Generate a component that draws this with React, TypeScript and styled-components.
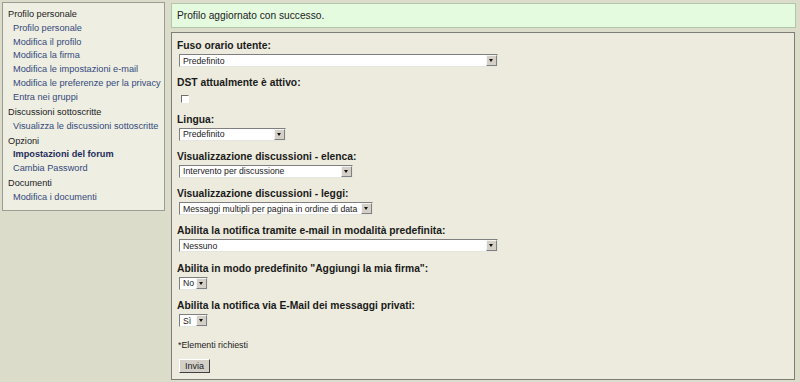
import React from "react";
import styled, { createGlobalStyle } from "styled-components";

const Global = createGlobalStyle`
  html, body { margin: 0; padding: 0; }
  body {
    background: #dcdccb;
    font-family: "Liberation Sans", Arial, sans-serif;
    color: #1a1a1a;
    width: 800px;
    height: 382px;
    overflow: hidden;
  }
`;

const Page = styled.div`
  display: flex;
  align-items: flex-start;
  gap: 6px;
  padding: 2px 4px 2px 2px;
  box-sizing: border-box;
  width: 800px;
  height: 382px;
`;

const Sidebar = styled.nav`
  width: 163px;
  height: 209px;
  box-sizing: border-box;
  background: #eeeee2;
  border: 1px solid #9c9c92;
  padding: 5px 0 0 5px;
  font-size: 9.2px;
  line-height: 13.8px;
`;

const Group = styled.div`
  & + & { margin-top: 1.2px; }
`;

const GroupTitle = styled.div`
  color: #222222;
`;

const NavLink = styled.a<{ $active?: boolean }>`
  display: block;
  padding-left: 5px;
  color: ${(p) => (p.$active ? "#1f2d5c" : "#34497c")};
  font-weight: ${(p) => (p.$active ? "bold" : "normal")};
  text-decoration: none;
`;

const Main = styled.div`
  flex: 1;
  display: flex;
  flex-direction: column;
  gap: 4px;
  padding-top: 1px;
`;

const Success = styled.div`
  height: 25px;
  box-sizing: border-box;
  background: #e4fbe0;
  border: 1px solid #b3c6ab;
  padding: 0 5px;
  font-size: 10.2px;
  line-height: 23px;
  color: #222;
`;

const FormPanel = styled.form`
  height: 348px;
  margin-right: 1px;
  box-sizing: border-box;
  background: #ecebdd;
  border: 1px solid #7d7d78;
  padding: 6px 5px 0 5px;
`;

const Field = styled.div`
  margin-bottom: 9.3px;
`;

const Label = styled.div`
  font-weight: bold;
  font-size: 10.3px;
  line-height: 14px;
  color: #1a1a1a;
  margin-bottom: 1px;
`;

const Select = styled.div<{ $w: number }>`
  display: flex;
  align-items: center;
  justify-content: space-between;
  width: ${(p) => p.$w}px;
  height: 13px;
  margin-left: 2px;
  box-sizing: border-box;
  background: #ffffff;
  border-style: solid;
  border-width: 1px;
  border-color: #7f7f7f #e6e6e0 #e6e6e0 #7f7f7f;
  padding-left: 3px;
  font-size: 8.7px;
  color: #222;
  white-space: nowrap;
  overflow: hidden;
`;

const Arrow = styled.span`
  flex: none;
  position: relative;
  width: 11px;
  height: 11px;
  box-sizing: border-box;
  background: #d4d0c8;
  border-style: solid;
  border-width: 1px;
  border-color: #f4f4f0 #808080 #808080 #f4f4f0;
  &::after {
    content: "";
    position: absolute;
    left: 2px;
    top: 3px;
    border-left: 2.5px solid transparent;
    border-right: 2.5px solid transparent;
    border-top: 3px solid #111;
  }
`;

const Check = styled.span`
  display: block;
  width: 8px;
  height: 8px;
  margin: 5px 0 0 4px;
  box-sizing: border-box;
  background: #fff;
  border-style: solid;
  border-width: 1px;
  border-color: #6f6f6f #ffffff #ffffff #6f6f6f;
`;

const Note = styled.div`
  font-size: 8.8px;
  margin: 13px 0 0 1px;
  color: #222;
`;

const Button = styled.button`
  display: block;
  margin: 9px 0 0 2px;
  width: 31px;
  height: 14px;
  padding: 0;
  background: #d4d0c8;
  border-style: solid;
  border-width: 1px;
  border-color: #ffffff #404040 #404040 #ffffff;
  font-family: "Liberation Sans", Arial, sans-serif;
  font-size: 9px;
  color: #222;
`;

const nav = [
  {
    title: "Profilo personale",
    links: [
      "Profilo personale",
      "Modifica il profilo",
      "Modifica la firma",
      "Modifica le impostazioni e-mail",
      "Modifica le preferenze per la privacy",
      "Entra nei gruppi",
    ],
  },
  { title: "Discussioni sottoscritte", links: ["Visualizza le discussioni sottoscritte"] },
  { title: "Opzioni", links: ["Impostazioni del forum", "Cambia Password"] },
  { title: "Documenti", links: ["Modifica i documenti"] },
];

const fields: { label: string; value?: string; w?: number; check?: boolean }[] = [
  { label: "Fuso orario utente:", value: "Predefinito", w: 319 },
  { label: "DST attualmente è attivo:", check: true },
  { label: "Lingua:", value: "Predefinito", w: 107 },
  { label: "Visualizzazione discussioni - elenca:", value: "Intervento per discussione", w: 174 },
  {
    label: "Visualizzazione discussioni - leggi:",
    value: "Messaggi multipli per pagina in ordine di data",
    w: 194,
  },
  { label: "Abilita la notifica tramite e-mail in modalità predefinita:", value: "Nessuno", w: 319 },
  { label: 'Abilita in modo predefinito "Aggiungi la mia firma":', value: "No", w: 29 },
  { label: "Abilita la notifica via E-Mail dei messaggi privati:", value: "Sì", w: 29 },
];

export default function App() {
  return (
    <>
      <Global />
      <Page>
        <Sidebar>
          {nav.map((g) => (
            <Group key={g.title}>
              <GroupTitle>{g.title}</GroupTitle>
              {g.links.map((l) => (
                <NavLink key={l} href="#" $active={l === "Impostazioni del forum"}>
                  {l}
                </NavLink>
              ))}
            </Group>
          ))}
        </Sidebar>
        <Main>
          <Success>Profilo aggiornato con successo.</Success>
          <FormPanel onSubmit={(e) => e.preventDefault()}>
            {fields.map((f) => (
              <Field key={f.label}>
                <Label>{f.label}</Label>
                {f.check ? (
                  <Check />
                ) : (
                  <Select $w={f.w!}>
                    <span>{f.value}</span>
                    <Arrow />
                  </Select>
                )}
              </Field>
            ))}
            <Note>*Elementi richiesti</Note>
            <Button type="submit">Invia</Button>
          </FormPanel>
        </Main>
      </Page>
    </>
  );
}
